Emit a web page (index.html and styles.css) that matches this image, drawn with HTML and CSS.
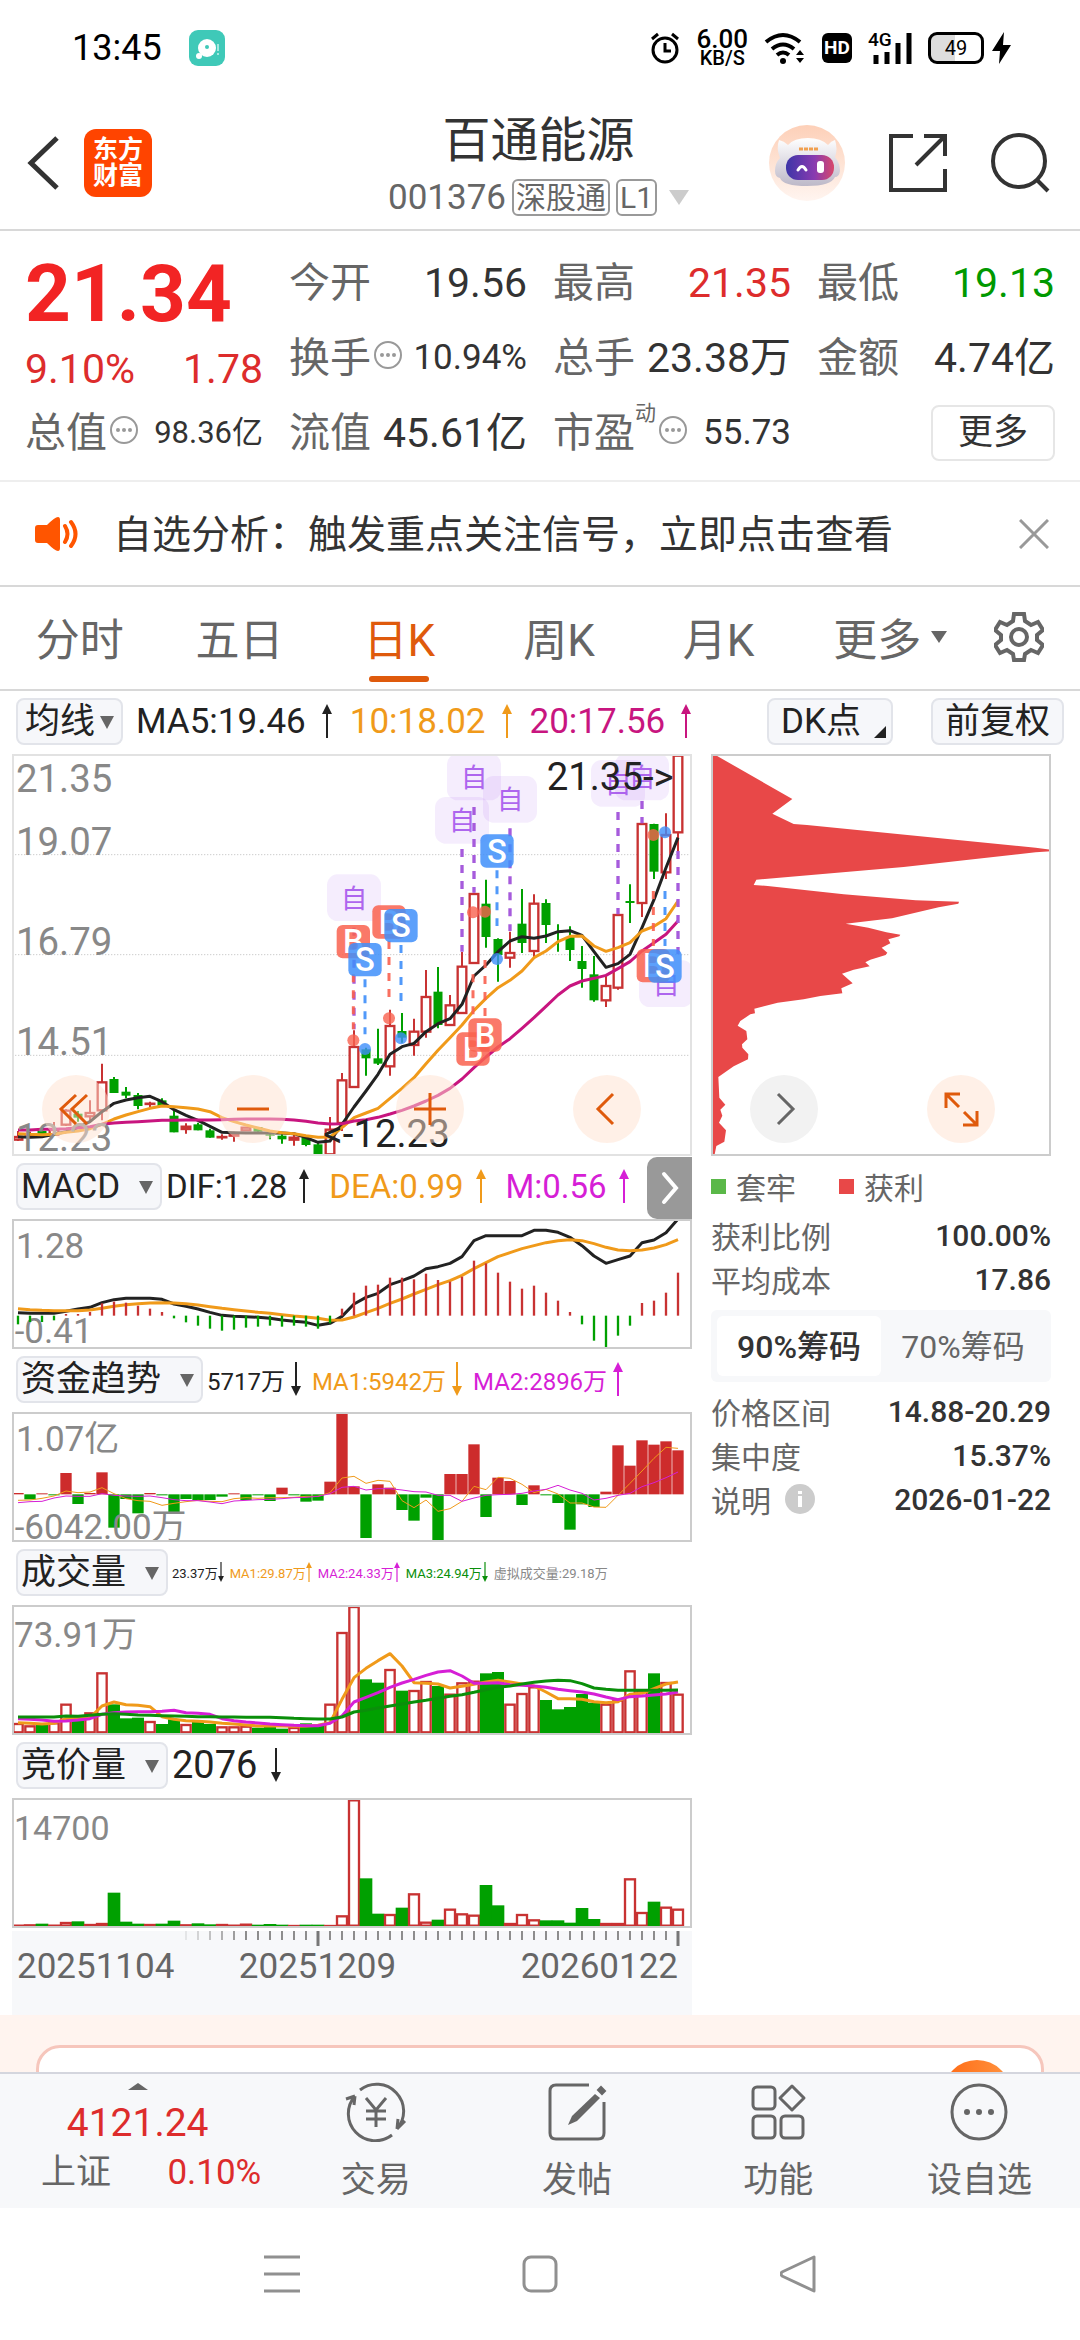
FILE: index.html
```html
<!DOCTYPE html>
<html lang="zh-CN">
<head>
  <meta charset="UTF-8" />
  <meta name="viewport" content="width=device-width, initial-scale=1.0" />
  <link rel="stylesheet" href="styles.css">
  <title>百通能源 001376</title>
</head>
<body>
  <!-- Shared icons -->
  <svg class="symbols" aria-hidden="true">
    <symbol id="arrow-up" viewBox="0 0 10 34"><path d="M5 0l5 10H6v24H4V10H0z" fill="currentColor"/></symbol>
    <symbol id="arrow-down" viewBox="0 0 10 34"><path d="M5 34l5-10H6V0H4v24H0z" fill="currentColor"/></symbol>
    <symbol id="dots" viewBox="0 0 30 30">
      <circle cx="15" cy="15" r="13" fill="none" stroke="#999" stroke-width="2"/>
      <g fill="#999"><circle cx="9" cy="15" r="2"/><circle cx="15" cy="15" r="2"/><circle cx="21" cy="15" r="2"/></g>
    </symbol>
  </svg>

  <div class="screen">
    <!-- Status bar -->
    <div class="status-bar">
      <span class="clock">13:45</span>
      <svg class="chat-app" viewBox="0 0 36 36">
        <rect width="36" height="36" rx="9" fill="#3fc9b8"/>
        <circle cx="18" cy="18" r="9" fill="#fff"/><circle cx="10" cy="26" r="3" fill="#fff"/>
        <circle cx="18" cy="17" r="2" fill="#3fc9b8"/><path d="M29 14v7M29 23v2" stroke="#a5e8df" stroke-width="2"/>
      </svg>
      <div class="status-icons">
        <svg width="30" height="32" viewBox="0 0 30 32" fill="none" stroke="#000" stroke-width="3">
          <circle cx="15" cy="18" r="12"/><path d="M15 11v8h6M2 7l6-5M28 7l-6-5" />
        </svg>
        <div class="net-speed"><span>6.00</span><span class="unit">KB/S</span></div>
        <svg width="42" height="32" viewBox="0 0 42 32" fill="none" stroke="#000" stroke-width="4">
          <path d="M2 10q17-14 34 0M8 17q11-9 22 0M13 23q6-5 12 0"/>
          <circle cx="19" cy="29" r="3" fill="#000" stroke="none"/>
          <path d="M32 23l4-5 4 5zM32 26l4 5 4-5z" fill="#000" stroke="none"/>
        </svg>
        <span class="hd">HD</span>
        <div class="signal">
          <span>4G</span>
          <svg width="44" height="32" viewBox="0 0 44 32" stroke="#000" stroke-width="5"><path d="M8 23v9M19 20v12M30 11v21M41 1v31"/></svg>
        </div>
        <div class="battery"><span>49</span></div>
        <svg width="20" height="32" viewBox="0 0 20 32"><path d="M12 0L0 19h8L7 32l12-19h-8z"/></svg>
      </div>
    </div>

    <!-- Header -->
    <header class="header">
      <div class="header-left">
        <button class="icon-btn" aria-label="返回">
          <svg width="34" height="56" viewBox="0 0 34 56" fill="none" stroke="#333" stroke-width="5"><path d="M31 3L5 28l26 25"/></svg>
        </button>
        <a class="logo" href="#">东方<br>财富</a>
      </div>
      <div class="header-title">
        <h1>百通能源</h1>
        <div class="stock-code">
          <span>001376</span><span class="tag">深股通</span><span class="tag">L1</span>
          <svg width="20" height="16" viewBox="0 0 20 16"><path d="M0 0h20L10 15z" fill="#ccc"/></svg>
        </div>
      </div>
      <div class="header-right">
        <button class="icon-btn" aria-label="智能助手">
          <svg width="76" height="76" viewBox="0 0 76 76">
            <defs>
              <linearGradient id="peach" x1="0" y1="0" x2="0" y2="1"><stop offset="0" stop-color="#fdd0b8"/><stop offset="1" stop-color="#fff5f0"/></linearGradient>
              <linearGradient id="visor"><stop offset="0" stop-color="#3d35a8"/><stop offset=".6" stop-color="#8a3bb0"/><stop offset="1" stop-color="#d8486a"/></linearGradient>
              <linearGradient id="helmet" x1="0" y1="0" x2="0" y2="1"><stop offset="0" stop-color="#fff"/><stop offset="1" stop-color="#bdb8c8"/></linearGradient>
            </defs>
            <circle cx="38" cy="38" r="38" fill="url(#peach)"/>
            <path d="M10 15q5 1 9 5 6-7 20-7 13 0 20 7 3-4 7-5 3 9 0 17 5 6 5 14-1 6-5 6-4 9-28 9t-27-8q-5-1-5-7 0-8 5-13-4-10-1-18z" fill="url(#helmet)"/>
            <rect x="17" y="30" width="48" height="25" rx="12" fill="url(#visor)"/>
            <path d="M29 45q4-7 8 0" fill="none" stroke="#fff" stroke-width="3" stroke-linecap="round"/>
            <rect x="48" y="36" width="7" height="12" rx="3" fill="#fff"/>
            <path d="M30 24h20" stroke="#f0a050" stroke-width="3" stroke-dasharray="4 1"/>
          </svg>
        </button>
        <button class="icon-btn" aria-label="分享">
          <svg width="58" height="58" viewBox="0 0 58 58" fill="none" stroke="#333" stroke-width="4"><path d="M24 2H2v54h54V35M35 2h21v20M56 2L27 31"/></svg>
        </button>
        <button class="icon-btn" aria-label="搜索">
          <svg width="60" height="60" viewBox="0 0 60 60" fill="none" stroke="#333" stroke-width="4"><circle cx="28" cy="28" r="26"/><path d="M46 47l11 11"/></svg>
        </button>
      </div>
    </header>

    <!-- Quote summary -->
    <section class="quotes">
      <div class="quote-col">
        <div class="price">21.34</div>
        <div class="change"><span>9.10%</span><span>1.78</span></div>
        <div class="quote"><span class="label">总值</span><svg class="dots"><use href="#dots"/></svg><span class="value small">98.36亿</span></div>
      </div>
      <div class="quote-col">
        <div class="quote"><span class="label">今开</span><span class="value">19.56</span></div>
        <div class="quote"><span class="label">换手</span><svg class="dots"><use href="#dots"/></svg><span class="value medium">10.94%</span></div>
        <div class="quote"><span class="label">流值</span><span class="value">45.61亿</span></div>
      </div>
      <div class="quote-col">
        <div class="quote"><span class="label">最高</span><span class="value up">21.35</span></div>
        <div class="quote"><span class="label">总手</span><span class="value">23.38万</span></div>
        <div class="quote"><span class="label">市盈</span><sup>动</sup><svg class="dots"><use href="#dots"/></svg><span class="value medium">55.73</span></div>
      </div>
      <div class="quote-col">
        <div class="quote"><span class="label">最低</span><span class="value down">19.13</span></div>
        <div class="quote"><span class="label">金额</span><span class="value">4.74亿</span></div>
        <div class="quote"><button class="more-btn">更多</button></div>
      </div>
    </section>

    <!-- Notice -->
    <section class="notice">
      <svg width="46" height="38" viewBox="0 0 46 38">
        <path d="M25 2q2 0 2 3v28q0 3-2 3-3 0-11-8H5q-3 0-3-3V13q0-3 3-3h9q8-8 11-8z" fill="#ff5500"/>
        <path d="M32 11q5 8 0 16M38 7q9 12 0 24" fill="none" stroke="#ff5500" stroke-width="4" stroke-linecap="round"/>
      </svg>
      <a href="#">自选分析：触发重点关注信号，立即点击查看</a>
      <button class="icon-btn" aria-label="关闭">
        <svg width="30" height="30" viewBox="0 0 30 30" stroke="#999" stroke-width="3"><path d="M1 1l28 28M29 1L1 29"/></svg>
      </button>
    </section>

    <!-- Period tabs -->
    <nav class="tabs">
      <button>分时</button>
      <button>五日</button>
      <button class="active">日K</button>
      <button>周K</button>
      <button>月K</button>
      <button class="tab-more">更多<svg width="16" height="12" viewBox="0 0 16 12"><path d="M0 0h16L8 12z" fill="#666"/></svg></button>
      <button class="tab-gear" aria-label="设置">
        <svg width="50" height="50" viewBox="0 0 50 50" fill="none" stroke="#666" stroke-width="4">
          <path d="M20 2h10l1 7 6 4 7-3 5 8-6 5v5l6 5-5 8-7-3-6 4-1 6H20l-1-6-6-4-7 3-5-8 6-5v-5l-6-5 5-8 7 3 6-4z"/>
          <circle cx="25" cy="25" r="8"/>
        </svg>
      </button>
    </nav>

    <!-- Charts -->
    <main class="content">
      <div class="ind-row toolbar">
        <label class="picker tight"><select aria-label="主图指标"><option>均线</option></select></label>
        <span class="ma">MA5:19.46<svg class="arrow"><use href="#arrow-up"/></svg></span>
        <span class="ma orange">10:18.02<svg class="arrow"><use href="#arrow-up"/></svg></span>
        <span class="ma pink">20:17.56<svg class="arrow"><use href="#arrow-up"/></svg></span>
        <button class="chip-btn dk">DK点</button>
        <button class="chip-btn">前复权</button>
      </div>

      <div class="chart-grid">
        <div class="left-col">
          <div class="chart main-chart">
            <svg id="kline" viewBox="36 39 2040 1206"></svg>
            <button class="side-toggle" aria-label="收起筹码">
              <svg width="18" height="38" viewBox="0 0 18 38" fill="none" stroke="#fff" stroke-width="4" stroke-linecap="round"><path d="M3 5l12 14L3 33"/></svg>
            </button>
          </div>

          <div class="ind-row">
            <label class="picker"><select aria-label="副图指标一"><option>MACD</option></select></label>
            <div class="readings wide">
              <span>DIF:1.28<svg class="arrow"><use href="#arrow-up"/></svg></span>
              <span class="orange">DEA:0.99<svg class="arrow"><use href="#arrow-up"/></svg></span>
              <span class="magenta">M:0.56<svg class="arrow"><use href="#arrow-up"/></svg></span>
            </div>
          </div>
          <div class="chart"><svg id="macd" viewBox="36 0 2040 390"></svg></div>

          <div class="ind-row">
            <label class="picker"><select aria-label="副图指标二"><option>资金趋势</option></select></label>
            <div class="readings narrow">
              <span>5717万<svg class="arrow"><use href="#arrow-down"/></svg></span>
              <span class="orange">MA1:5942万<svg class="arrow"><use href="#arrow-down"/></svg></span>
              <span class="magenta">MA2:2896万<svg class="arrow"><use href="#arrow-up"/></svg></span>
            </div>
          </div>
          <div class="chart"><svg id="funds" viewBox="36 0 2040 390"></svg></div>

          <div class="ind-row">
            <label class="picker"><select aria-label="副图指标三"><option>成交量</option></select></label>
            <div class="readings tiny">
              <span>23.37万<svg class="arrow"><use href="#arrow-down"/></svg></span>
              <span class="orange">MA1:29.87万<svg class="arrow"><use href="#arrow-up"/></svg></span>
              <span class="magenta">MA2:24.33万<svg class="arrow"><use href="#arrow-up"/></svg></span>
              <span class="green">MA3:24.94万<svg class="arrow"><use href="#arrow-down"/></svg></span>
              <span class="grey">虚拟成交量:29.18万</span>
            </div>
          </div>
          <div class="chart"><svg id="volume" viewBox="36 0 2040 390"></svg></div>

          <div class="ind-row">
            <label class="picker"><select aria-label="副图指标四"><option>竞价量</option></select></label>
            <div class="readings big">
              <span>2076<svg class="arrow"><use href="#arrow-down"/></svg></span>
            </div>
          </div>
          <div class="chart"><svg id="auction" viewBox="36 0 2040 390"></svg></div>

          <div class="time-axis">
            <svg id="ticks" viewBox="36 0 2040 54"></svg>
            <div class="dates"><span>20251104</span><span>20251209</span><span>20260122</span></div>
          </div>
        </div>

        <aside class="right-col">
          <div class="chart chip-chart">
            <svg viewBox="62 219 1020 1206">
              <path fill="#e84848" d="M62 219h8L306 354 246 398 310 429 350 432 1036 500 1082 506V511L1036 514 640 558 198 596 190 612 232 615 460 640 676 658 806 662 804 668 745 679 605 712 466 728 534 740 588 754 630 761 627 766 594 775 600 787 574 800 591 815 586 822 540 836 525 844 538 856 490 866 455 878 487 907 453 922 456 937 390 945 340 955 262 965 192 983 194 997 180 1000 150 1020 142 1034 168 1050 171 1075 155 1090 156 1100 174 1120 173 1135 130 1156 84 1188 87 1250 105 1271 90 1286 96 1304 86 1325 107 1348 102 1382 78 1395 72 1425H62z"/>
            </svg>
          </div>
          <div class="legend"><span class="trapped">套牢</span><span class="profit">获利</span></div>
          <div class="stat"><span>获利比例</span><b>100.00%</b></div>
          <div class="stat"><span>平均成本</span><b>17.86</b></div>
          <div class="segment">
            <button class="on">90%筹码</button>
            <button>70%筹码</button>
          </div>
          <div class="stat"><span>价格区间</span><b>14.88-20.29</b></div>
          <div class="stat"><span>集中度</span><b>15.37%</b></div>
          <div class="stat">
            <span>说明</span>
            <svg class="info" width="30" height="30" viewBox="0 0 30 30"><circle cx="15" cy="15" r="15" fill="#ccc"/><path d="M15 12v11M15 7v3" stroke="#fff" stroke-width="4"/></svg>
            <b>2026-01-22</b>
          </div>
        </aside>

        <!-- Round controls floating over the charts -->
        <div class="chart-controls">
          <button aria-label="最左"><svg viewBox="0 0 68 68"><path d="M34 20L19 34l15 15M45 20L30 34l15 15"/></svg></button>
          <button aria-label="缩小"><svg viewBox="0 0 68 68"><path d="M18 34h32"/></svg></button>
          <button aria-label="放大"><svg viewBox="0 0 68 68"><path d="M18 34h32M34 18v32"/></svg></button>
          <button aria-label="左移"><svg viewBox="0 0 68 68"><path d="M40 19L25 34l15 15"/></svg></button>
          <button class="disabled" aria-label="右移"><svg viewBox="0 0 68 68"><path d="M28 19l15 15-15 15"/></svg></button>
          <button aria-label="全屏"><svg viewBox="0 0 68 68"><path d="M33 19H19v14M19 19l13 13M36 50h14V36M50 50L37 37"/></svg></button>
        </div>
      </div>

      <div class="banner"><div class="banner-card"><span class="banner-dot"></span></div></div>
    </main>

    <!-- Bottom bar -->
    <nav class="bottom-bar">
      <a class="index" href="#">
        <svg width="20" height="7" viewBox="0 0 20 7"><path d="M0 7L10 0l10 7z" fill="#666"/></svg>
        <span class="index-value">4121.24</span>
        <span class="index-row"><span>上证</span><span class="up">0.10%</span></span>
      </a>
      <a href="#">
        <svg viewBox="0 0 64 60"><path d="M16 8A27 27 0 0 1 53 47M48 53A27 27 0 0 1 11 14M11 14l-9 3M11 14l-1 9M53 47l8-8M53 47l1-10M22 16l10 12 10-12M32 28v17M22 29h20M22 37h20"/></svg>
        <span>交易</span>
      </a>
      <a href="#">
        <svg viewBox="0 0 64 60"><path d="M44 3H11q-6 0-6 6v42q0 6 6 6h42q6 0 6-6V20"/><path d="M27 34L50 12l5 4-23 23-9 4z" fill="#666" stroke="none"/><path d="M53 8l3-3 4 4-3 3z" fill="#666" stroke-width="2"/></svg>
        <span>发帖</span>
      </a>
      <a href="#">
        <svg viewBox="0 0 64 60"><rect x="7" y="5" width="22" height="22" rx="4"/><rect x="7" y="34" width="22" height="22" rx="4"/><rect x="35" y="34" width="22" height="22" rx="4"/><path d="M46 4l12 12-12 12-12-12z" stroke-linejoin="round"/></svg>
        <span>功能</span>
      </a>
      <a href="#">
        <svg viewBox="0 0 64 60"><circle cx="32" cy="30" r="27"/><g fill="#666" stroke="none"><circle cx="20" cy="30" r="3"/><circle cx="32" cy="30" r="3"/><circle cx="44" cy="30" r="3"/></g></svg>
        <span>设自选</span>
      </a>
    </nav>

    <!-- System navigation -->
    <div class="system-nav">
      <button class="icon-btn" aria-label="任务"><svg width="36" height="38" viewBox="0 0 36 38" stroke="#909090" stroke-width="3"><path d="M0 2h36M0 19h36M0 36h36"/></svg></button>
      <button class="icon-btn" aria-label="主页"><svg width="36" height="38" viewBox="0 0 36 38" fill="none" stroke="#909090" stroke-width="3"><rect x="2" y="2" width="32" height="34" rx="7"/></svg></button>
      <button class="icon-btn" aria-label="后退"><svg width="36" height="38" viewBox="0 0 36 38" fill="none" stroke="#909090" stroke-width="3" stroke-linejoin="round"><path d="M34 2v34L2 21q-2-2 0-4z"/></svg></button>
    </div>
  </div>

<script src="charts.js"></script>
</body>
</html>
```

FILE: styles.css
```css
/* Reset */
* {
  margin: 0;
  padding: 0;
  box-sizing: border-box;
}

body {
  font-family: Roboto, "Noto Sans CJK SC", sans-serif;
  color: #333;
  background: #fff;
}

button, select {
  font: inherit;
  color: inherit;
  background: none;
  border: none;
}

a {
  color: inherit;
  text-decoration: none;
}

svg {
  display: block;
  flex: none;
}

.symbols {
  position: absolute;
  width: 0;
  height: 0;
}

.screen {
  display: flex;
  flex-direction: column;
  height: 100vh;
}

/* Colours */
.up { color: #dd2c2c; }
.down { color: #009900; }
.orange { color: #f09a1a; }
.pink { color: #c8157f; }
.magenta { color: #d61fd6; }
.green { color: #0a8f0a; }
.grey { color: #888; }

/* Status bar */
.status-bar {
  display: flex;
  align-items: center;
  height: 96px;
  padding: 0 68px 0 72px;
  color: #000;
}

.clock {
  font-size: 36px;
}

.chat-app {
  width: 36px;
  height: 36px;
  margin-left: 27px;
}

.status-icons {
  display: flex;
  align-items: center;
  gap: 16px;
  margin-left: auto;
}

.net-speed {
  display: flex;
  flex-direction: column;
  align-items: center;
  font-size: 26px;
  font-weight: 500;
  line-height: 20px;
}

.net-speed .unit {
  font-size: 20px;
  line-height: 18px;
}

.hd {
  width: 30px;
  background: #000;
  border-radius: 6px;
  color: #fff;
  font-size: 19px;
  font-weight: 700;
  line-height: 30px;
  text-align: center;
}

.signal {
  position: relative;
}

.signal span {
  position: absolute;
  top: -2px;
  left: 0;
  font-size: 19px;
  font-weight: 500;
  line-height: 20px;
}

.battery {
  width: 56px;
  border: 3px solid #000;
  border-radius: 9px;
  background: linear-gradient(90deg, #ddd 49%, #fff 49%);
  font-size: 20px;
  line-height: 26px;
  text-align: center;
}

.status-icons .battery + svg {
  margin-left: -8px;
}

/* Header */
.header {
  display: grid;
  grid-template-columns: 1fr auto 1fr;
  align-items: center;
  height: 135px;
  padding: 0 29px 0 26px;
  border-bottom: 2px solid #d8d8d8;
}

.header-left, .header-right {
  display: flex;
  align-items: center;
}

.header-left {
  gap: 24px;
}

.header-right {
  justify-content: flex-end;
  gap: 44px;
}

.logo {
  width: 68px;
  padding: 8px 0;
  border-radius: 12px;
  background: #ff4400;
  color: #fff;
  font-size: 25px;
  font-weight: 700;
  line-height: 26px;
  text-align: center;
}

.header-title {
  padding-top: 6px;
  text-align: center;
}

.header-title h1 {
  font-size: 48px;
  font-weight: 400;
  line-height: 64px;
}

.stock-code {
  display: flex;
  align-items: center;
  justify-content: center;
  gap: 6px;
  font-size: 35px;
  line-height: 50px;
  color: #666;
}

.tag {
  padding: 0 2px;
  border: 2px solid #999;
  border-radius: 6px;
  font-size: 30px;
  line-height: 33px;
}

.stock-code svg {
  margin-left: 6px;
}

/* Quotes */
.quotes {
  display: grid;
  grid-template-columns: repeat(4, 1fr);
  gap: 26px;
  padding: 14px 25px 10px;
  border-bottom: 2px solid #eee;
}

.price {
  font-size: 80px;
  font-weight: 700;
  line-height: 98px;
  color: #f22424;
}

.change {
  display: flex;
  justify-content: space-between;
  font-size: 41px;
  line-height: 52px;
  color: #dd2c2c;
}

.quote {
  display: flex;
  align-items: center;
  height: 75px;
  font-size: 41px;
  line-height: 60px;
}

.quote .label {
  color: #666;
}

.quote .value {
  margin-left: auto;
}

.quote .medium {
  font-size: 35px;
}

.quote .small {
  font-size: 31px;
}

.quote sup {
  align-self: flex-start;
  font-size: 21px;
  line-height: 36px;
  color: #666;
}

.dots {
  width: 30px;
  height: 30px;
  margin: 0 2px 6px;
}

.more-btn {
  width: 124px;
  margin-left: auto;
  border: 2px solid #e6e6e6;
  border-radius: 8px;
  font-size: 35px;
  line-height: 52px;
}

/* Notice */
.notice {
  display: flex;
  align-items: center;
  height: 105px;
  padding: 0 31px 0 33px;
  border-bottom: 2px solid #d8d8d8;
  font-size: 39px;
}

.notice a {
  flex: 1;
  margin-left: 34px;
  padding-bottom: 6px;
}

/* Tabs */
.tabs {
  display: flex;
  height: 104px;
  padding-right: 24px;
  border-bottom: 2px solid #d8d8d8;
  font-size: 44px;
  color: #666;
}

.tabs button {
  position: relative;
  flex: 160;
  padding-bottom: 2px;
}

.tabs .active {
  color: #df5a0c;
}

.tabs .active::after {
  content: "";
  position: absolute;
  bottom: 7px;
  left: 50%;
  width: 60px;
  height: 6px;
  margin-left: -30px;
  border-radius: 3px;
  background: #df5a0c;
}

.tabs .tab-more, .tabs .tab-gear {
  display: flex;
  align-items: center;
  justify-content: center;
}

.tabs .tab-more {
  flex: 184;
  gap: 10px;
}

.tabs .tab-gear {
  flex: 74;
}

/* Chart area */
.content {
  flex: 1;
  min-height: 0;
  overflow: hidden;
}

.ind-row {
  display: flex;
  align-items: center;
  height: 63px;
  padding: 0 0 3px 4px;
  color: #222;
}

.toolbar {
  padding: 0 16px 3px;
  font-size: 35px;
}

.picker {
  position: relative;
  flex: none;
}

.picker select {
  display: block;
  height: 47px;
  padding: 0 39px 0 3px;
  border: 2px solid #e2e4ea;
  border-radius: 8px;
  background: #f6f7fa;
  font-size: 35px;
  line-height: 43px;
  appearance: none;
}

.picker::after {
  content: "";
  position: absolute;
  top: 18px;
  right: 9px;
  border: 7px solid transparent;
  border-top: 13px solid #666;
  border-bottom: none;
  pointer-events: none;
}

.picker.tight select {
  padding: 0 25px 0 7px;
}

.ma {
  display: flex;
  align-items: center;
  gap: 16px;
  margin-right: 18px;
}

.picker + .ma {
  margin-left: 13px;
}

.arrow {
  width: 10px;
  height: 34px;
}

.chip-btn {
  position: relative;
  height: 47px;
  padding: 0 12px;
  border: 2px solid #e2e4ea;
  border-radius: 8px;
  background: #f6f7fa;
  line-height: 43px;
}

.chip-btn.dk {
  margin-left: auto;
  margin-right: 38px;
  padding: 0 30px 0 12px;
}

.chip-btn.dk::after {
  content: "";
  position: absolute;
  right: 5px;
  bottom: 5px;
  border-left: 12px solid transparent;
  border-bottom: 12px solid #222;
}

.chart-grid {
  position: relative;
  display: grid;
  grid-template-columns: 2fr 1fr;
  gap: 19px;
  padding: 0 29px 0 12px;
}

.chart {
  position: relative;
  outline: 2px solid #ccc;
  outline-offset: -2px;
}

.chart > svg {
  width: 100%;
  height: auto;
}

.main-chart {
  outline-color: #e2e2e2;
}

.side-toggle {
  position: absolute;
  top: 100%;
  right: 0;
  width: 45px;
  height: 62px;
  margin-top: 1px;
  padding-left: 14px;
  border-radius: 10px 0 0 10px;
  background: #999;
}

.readings {
  display: flex;
  margin-left: 4px;
  white-space: nowrap;
}

.readings span {
  display: flex;
  align-items: center;
}

.readings.wide {
  gap: 20px;
  font-size: 33px;
}

.readings.wide span {
  gap: 12px;
}

.readings.narrow {
  gap: 11px;
  font-size: 24px;
}

.readings.narrow span {
  gap: 6px;
}

.readings.tiny {
  gap: 6px;
  font-size: 13px;
}

.readings.tiny .arrow {
  width: 6px;
  height: 20px;
}

.readings.big {
  font-size: 38px;
}

.readings.big span {
  gap: 14px;
}

/* Time axis */
.time-axis {
  margin-top: 3px;
  padding-bottom: 30px;
  background: #f7f8fa;
}

.time-axis svg {
  width: 100%;
  height: auto;
}

.dates {
  display: flex;
  justify-content: space-between;
  padding: 0 14px 0 5px;
  font-size: 35px;
  line-height: 36px;
  color: #666;
}

.dates span:nth-child(2) {
  margin-right: 60px;
}

/* Chip distribution */
.legend {
  display: flex;
  gap: 43px;
  height: 58px;
  padding-top: 2px;
  font-size: 30px;
  color: #666;
}

.legend span {
  display: flex;
  align-items: center;
  gap: 10px;
}

.legend span::before {
  content: "";
  width: 15px;
  height: 15px;
  background: #5ab848;
}

.legend .profit::before {
  background: #e84848;
}

.stat {
  display: flex;
  align-items: center;
  height: 44px;
  padding-bottom: 2px;
  font-size: 30px;
  color: #666;
}

.stat b {
  margin-left: auto;
  font-weight: 500;
  color: #333;
}

.info {
  margin-left: 14px;
}

.segment {
  display: flex;
  height: 72px;
  margin: 8px 0;
  padding: 6px;
  border-radius: 6px;
  background: #f7f8fa;
}

.segment button {
  flex: 1;
  padding-bottom: 4px;
  border-radius: 6px;
  font-size: 32px;
  color: #666;
}

.segment .on {
  background: #fff;
  font-weight: 500;
  color: #333;
}

/* Floating controls */
.chart-controls {
  position: absolute;
  top: 321px;
  left: 42px;
  display: flex;
  gap: 109px;
}

.chart-controls button {
  width: 68px;
  height: 68px;
  border-radius: 50%;
  background: rgba(255, 225, 208, 0.5);
}

.chart-controls svg {
  fill: none;
  stroke: #df5a0c;
  stroke-width: 3;
}

.chart-controls .disabled {
  background: #f2f2f2;
}

.chart-controls .disabled svg {
  stroke: #666;
}

/* Banner */
.banner {
  height: 120px;
  padding: 30px 36px 0;
  background: #fff4ef;
}

.banner-card {
  height: 120px;
  padding: 12px 30px;
  border: 3px solid #f6c6bc;
  border-radius: 24px;
  background: #fff;
}

.banner-dot {
  display: block;
  width: 68px;
  height: 68px;
  margin-left: auto;
  border-radius: 50%;
  background: linear-gradient(90deg, #ff6a14, #ff9440);
}

/* Bottom bar */
.bottom-bar {
  display: flex;
  height: 136px;
  border-top: 2px solid #d4d6de;
  background: #f7f8fa;
  color: #666;
  font-size: 35px;
}

.bottom-bar a {
  display: flex;
  flex: 201;
  flex-direction: column;
  align-items: center;
  padding-top: 8px;
  line-height: 78px;
}

.bottom-bar a > svg {
  width: 64px;
  height: 60px;
  fill: none;
  stroke: #666;
  stroke-width: 3;
}

.bottom-bar .index {
  flex: 275;
  line-height: 50px;
}

.bottom-bar .index > svg {
  width: 20px;
  height: 7px;
  margin-top: 1px;
  stroke: none;
}

.index-value {
  padding-top: 8px;
  font-size: 39px;
  color: #dd2c2c;
}

.index-row {
  display: flex;
  align-self: stretch;
  justify-content: space-between;
  padding: 0 14px 0 41px;
}

/* System navigation */
.system-nav {
  display: flex;
  justify-content: center;
  gap: 222px;
  height: 132px;
  align-items: center;
}
```

FILE: charts.js
```js
// Charts share one horizontal scale: 56 bars, 36 units apart, 3 units to a pixel
const RED = '#c83232';
const GREEN = '#00a000';
const BLACK = '#222';
const ORANGE = '#f09a1a';
const PINK = '#c8157f';
const MAGENTA = '#d61fd6';
const GREY = '#888';

const x = i => 54 + i * 36;

function add(svg, tag, attrs, text) {
  const el = document.createElementNS('http://www.w3.org/2000/svg', tag);
  for (const key in attrs) el.setAttribute(key, attrs[key]);
  if (text) el.textContent = text;
  svg.appendChild(el);
}

function line(svg, ys, color, width) {
  const points = ys.map((y, i) => x(i) + ',' + y).join(' ');
  add(svg, 'polyline', { points, fill: 'none', stroke: color, 'stroke-width': width, 'stroke-linejoin': 'round' });
}

function label(svg, left, base, text, size, color) {
  add(svg, 'text', { x: left, y: base, 'font-size': size, fill: color || GREY }, text);
}

// Hollow red or solid green column
function column(svg, i, top, bottom, red, w) {
  if (red) {
    add(svg, 'rect', { x: x(i) - w / 2 + 4, y: top + 4, width: w - 8, height: Math.max(bottom - top - 8, 1), fill: '#fff', stroke: RED, 'stroke-width': 7 });
  } else {
    add(svg, 'rect', { x: x(i) - w / 2, y: top, width: w, height: Math.max(bottom - top, 3), fill: GREEN });
  }
}

// ---------- K line ----------
const kline = document.getElementById('kline');

// [colour, high, body top, body bottom, low]
const candles = [
  ['r', 1170, 1184, 1200, 1200], ['r', 1172, 1176, 1186, 1186], ['g', 1168, 1170, 1185, 1190], ['r', 1143, 1163, 1185, 1185],
  ['r', 1105, 1105, 1155, 1155], ['g', 1110, 1118, 1130, 1142], ['r', 1078, 1112, 1130, 1142], ['r', 968, 1020, 1112, 1138],
  ['g', 1008, 1014, 1056, 1056], ['g', 1038, 1052, 1064, 1072], ['g', 1056, 1062, 1095, 1105], ['r', 1082, 1084, 1092, 1098],
  ['g', 1072, 1078, 1096, 1096], ['g', 1107, 1124, 1174, 1174], ['r', 1147, 1153, 1168, 1178], ['g', 1145, 1150, 1168, 1168],
  ['g', 1163, 1168, 1190, 1190], ['r', 1180, 1184, 1192, 1196], ['r', 1172, 1178, 1188, 1202], ['r', 1158, 1156, 1172, 1170],
  ['g', 1158, 1158, 1172, 1172], ['g', 1176, 1180, 1184, 1195], ['g', 1180, 1184, 1195, 1208], ['r', 1180, 1186, 1200, 1214],
  ['g', 1190, 1190, 1212, 1216], ['g', 1205, 1210, 1244, 1244], ['r', 1128, 1162, 1244, 1244], ['r', 996, 1014, 1150, 1170],
  ['r', 868, 914, 1042, 1040], ['g', 920, 925, 952, 1004], ['g', 863, 952, 968, 972], ['r', 806, 851, 980, 1004],
  ['g', 816, 870, 890, 905], ['r', 833, 868, 916, 944], ['r', 687, 764, 876, 890], ['g', 678, 752, 852, 862],
  ['r', 762, 789, 856, 854], ['r', 633, 673, 820, 818], ['r', 455, 455, 670, 668], ['g', 416, 488, 588, 620],
  ['g', 592, 594, 642, 722], ['r', 572, 632, 654, 680], ['g', 444, 548, 606, 636], ['r', 460, 484, 634, 650],
  ['g', 475, 486, 552, 606], ['g', 550, 573, 576, 632], ['g', 556, 588, 627, 660], ['g', 615, 660, 684, 740],
  ['g', 645, 700, 778, 782], ['r', 705, 731, 782, 798], ['r', 518, 518, 744, 746], ['g', 430, 480, 486, 546],
  ['r', 245, 245, 490, 528], ['g', 248, 249, 392, 414], ['r', 217, 278, 398, 414], ['r', 40, 40, 278, 330]
];

const ma5 = [1187,1189,1187,1180,1172,1160,1142,1112,1087,1077,1070,1066,1082,1106,1123,1138,1156,1174,1175,1176,1176,1176,1176,1178,1190,1204,1200,1150,1098,1050,1000,940,917,907,872,848,833,790,705,672,632,600,587,592,585,572,569,583,632,679,668,640,560,476,380,290];
const ma10 = [1178,1180,1181,1180,1174,1170,1163,1150,1134,1122,1112,1102,1095,1097,1100,1104,1112,1130,1142,1152,1161,1170,1175,1178,1184,1189,1188,1160,1130,1116,1102,1072,1042,1010,968,928,890,852,808,772,740,718,690,650,630,602,586,585,615,631,620,605,570,556,533,480];
const ma20 = [1167,1167,1165,1165,1163,1160,1157,1150,1146,1144,1142,1140,1138,1138,1137,1137,1137,1136,1135,1134,1134,1134,1135,1137,1141,1146,1149,1148,1140,1136,1129,1119,1108,1095,1080,1063,1042,1014,980,948,918,893,862,830,796,762,735,720,712,703,683,662,630,605,580,540];

[341, 641, 943].forEach(y => {
  add(kline, 'line', { x1: 36, x2: 2076, y1: y, y2: y, stroke: '#ccc', 'stroke-width': 3, 'stroke-dasharray': '4 5' });
});

// Self-select notes: [centre x, centre y, line x, line start, line end]
const notes = [
  [1422, 108, 1422, 198, 455], [1386, 238, 1386, 324, 632], [1530, 175, 1530, 262, 570], [1062, 470, 1062, 560, 865],
  [1854, 127, 1854, 213, 520], [1926, 108, 1926, 180, 247], [1998, 728, 2034, 330, 640]
];
notes.forEach(([cx, cy]) => {
  add(kline, 'rect', { x: cx - 81, y: cy - 70, width: 162, height: 140, rx: 32, fill: '#a050f0', opacity: 0.1 });
  add(kline, 'text', { x: cx, y: cy + 30, 'font-size': 80, fill: '#ae66ee', 'text-anchor': 'middle' }, '自');
});

candles.forEach(([c, high, top, bottom, low], i) => {
  add(kline, 'line', { x1: x(i), x2: x(i), y1: high, y2: low, stroke: c === 'r' ? RED : GREEN, 'stroke-width': 6 });
  column(kline, i, top, bottom, c === 'r', c === 'r' ? 34 : 27);
});

line(kline, ma5, BLACK, 9);
line(kline, ma10, ORANGE, 9);
line(kline, ma20, PINK, 9);

label(kline, 48, 153, '21.35', 115);
label(kline, 48, 341, '19.07', 115);
label(kline, 48, 641, '16.79', 115);
label(kline, 48, 943, '14.51', 115);
label(kline, 48, 1231, '12.23', 115);

notes.forEach(([, , lx, y1, y2]) => {
  add(kline, 'line', { x1: lx, x2: lx, y1, y2, stroke: '#a65bdc', 'stroke-width': 10, 'stroke-dasharray': '24 24' });
});

// Buy / sell marks: [letter, centre x, centre y, line start, line end, dot y]
const trades = [
  ['B', 1060, 602, 700, 865, 898], ['B', 1167, 543, 600, 770, 832], ['B', 1419, 924, 700, 825, 514],
  ['B', 1455, 882, 657, 825, 512], ['B', 1960, 674, 450, 615, 282],
  ['S', 1491, 330, 388, 555, 654], ['S', 1095, 656, 715, 880, 924], ['S', 1203, 554, 612, 780, 892], ['S', 1995, 675, 450, 615, 274]
];
trades.forEach(([t, cx, cy, y1, y2, dot]) => {
  const color = t === 'B' ? '#f9614f' : '#3f8ffa';
  add(kline, 'line', { x1: cx, x2: cx, y1, y2, stroke: color, 'stroke-width': 9, 'stroke-dasharray': '24 24', opacity: 0.9 });
  add(kline, 'circle', { cx, cy: dot, r: 18, fill: color, opacity: 0.8 });
  add(kline, 'rect', { x: cx - 50, y: cy - 50, width: 100, height: 100, rx: 18, fill: color, opacity: 0.85 });
  add(kline, 'text', { x: cx, y: cy + 35, 'font-size': 98, 'font-weight': 500, fill: '#fff', 'text-anchor': 'middle' }, t);
});

label(kline, 1640, 147, '21.35->', 115, BLACK);
label(kline, 970, 1217, '<-12.23', 115, BLACK);

// ---------- MACD ----------
const macd = document.getElementById('macd');
const hist = [-26,-19,-19,-14,5,5,11,37,42,39,30,21,11,-8,-20,-30,-39,-45,-42,-36,-33,-30,-33,-30,-33,-39,-23,21,69,90,93,114,114,109,126,107,102,117,165,157,129,102,81,90,69,45,11,-26,-75,-96,-60,-30,38,45,69,129];
label(macd, 48, 116, '1.28', 105);
label(macd, 44, 373, '-0.41', 105);
line(macd, [281,283,283,283,277,270,265,251,242,238,238,238,241,255,262,270,280,289,292,293,295,298,303,307,310,319,313,292,255,235,223,197,185,171,149,143,133,113,65,50,50,50,50,34,34,40,55,80,111,133,122,111,71,63,41,0], BLACK, 9);
line(macd, [269,272,274,275,275,275,273,268,262,257,254,252,251,252,254,258,263,268,272,276,280,283,287,291,294,298,304,303,294,281,268,253,240,225,211,197,185,169,149,131,113,101,89,80,71,65,62,65,74,85,93,95,93,87,77,62], ORANGE, 9);
hist.forEach((v, i) => {
  add(macd, 'line', { x1: x(i), x2: x(i), y1: 290, y2: 290 - v, stroke: v > 0 ? RED : GREEN, 'stroke-width': 7 });
});

// ---------- Funds ----------
const funds = document.getElementById('funds');
const flow = [4,-15,3,-3,64,-29,4,66,-100,-14,-57,4,-3,-53,-14,-17,-17,-7,3,-17,-3,-20,20,-3,-22,-19,38,247,24,-131,30,20,-47,-79,-10,-140,61,61,150,-68,50,40,-32,27,-3,-26,-106,-30,-38,8,147,86,162,149,159,132];
flow.forEach((v, i) => {
  add(funds, 'rect', { x: x(i) - 17, y: v > 0 ? 247 - v : 247, width: 34, height: Math.abs(v), fill: v > 0 ? '#cd2c2c' : GREEN });
});
label(funds, 48, 116, '1.07亿', 105);
label(funds, 44, 380, '-6042.00万', 105);
line(funds, [265,264,259,252,237,242,240,227,245,260,266,268,280,274,269,265,268,269,260,257,259,257,257,256,253,253,242,198,193,214,205,208,266,287,264,298,290,268,223,233,196,199,217,242,232,246,273,273,285,286,250,214,177,139,106,109], ORANGE, 3);
line(funds, [272,269,268,258,252,253,253,245,250,252,253,252,257,263,266,266,270,275,267,265,263,262,260,257,256,253,245,226,223,234,230,230,234,239,240,250,250,268,258,250,248,247,244,237,232,220,234,244,264,259,250,244,224,212,197,180], MAGENTA, 3);

// ---------- Volume ----------
const volume = document.getElementById('volume');
const redDays = new Set([0, 1, 3, 4, 6, 7, 11, 14, 17, 18, 19, 23, 26, 27, 28, 31, 33, 34, 36, 37, 38, 41, 42, 43, 49, 50, 51, 52, 54, 55]);
[353,360,358,351,295,343,321,201,298,340,338,347,357,343,356,350,357,363,363,361,368,365,371,365,355,361,295,80,2,223,233,191,257,254,227,243,265,231,226,205,201,295,263,243,285,313,306,267,293,295,283,195,253,205,230,265].forEach((top, i) => {
  column(volume, i, top, 386, redDays.has(i), 36);
});
label(volume, 42, 127, '73.91万', 105);
line(volume, [353,355,357,355,341,340,338,303,291,299,301,305,335,343,347,349,351,355,357,360,363,363,363,364,363,361,353,283,218,190,167,146,183,233,235,237,249,244,238,231,226,231,237,243,261,281,281,283,290,293,290,268,265,251,237,231], ORANGE, 9);
line(volume, [341,343,345,349,348,345,341,328,323,321,320,320,319,316,323,325,328,341,347,351,354,357,359,361,362,362,355,333,291,277,263,247,234,223,211,201,197,213,235,235,233,239,241,243,247,253,257,261,267,276,284,275,273,270,267,261], MAGENTA, 9);
line(volume, [336,336,336,336,333,334,331,328,326,328,330,331,332,333,334,335,335,336,336,337,337,337,338,340,341,342,342,336,321,316,309,303,297,291,286,280,274,269,262,254,247,243,237,232,228,226,227,236,249,253,256,256,256,256,256,255], '#0a8f0a', 9);

// ---------- Auction volume ----------
const auction = document.getElementById('auction');
[379,378,377,379,371,370,377,374,284,371,377,377,377,368,378,376,379,377,379,376,380,378,380,380,380,380,380,351,3,241,347,347,329,285,370,365,331,345,349,261,322,374,347,363,367,367,374,330,363,374,374,240,341,311,325,331].forEach((top, i) => {
  column(auction, i, top, 387, redDays.has(i), 38);
});
label(auction, 42, 127, '14700', 102);

// ---------- Time axis ----------
const ticks = document.getElementById('ticks');
for (let i = 14; i < 56; i++) {
  const major = i === 25 || i === 55;
  add(ticks, 'line', {
    x1: x(i), x2: x(i), y1: 0, y2: major ? 45 : 27,
    stroke: '#777', 'stroke-width': major ? 9 : 5, opacity: Math.min(1, (i - 13) / 6)
  });
}
```
